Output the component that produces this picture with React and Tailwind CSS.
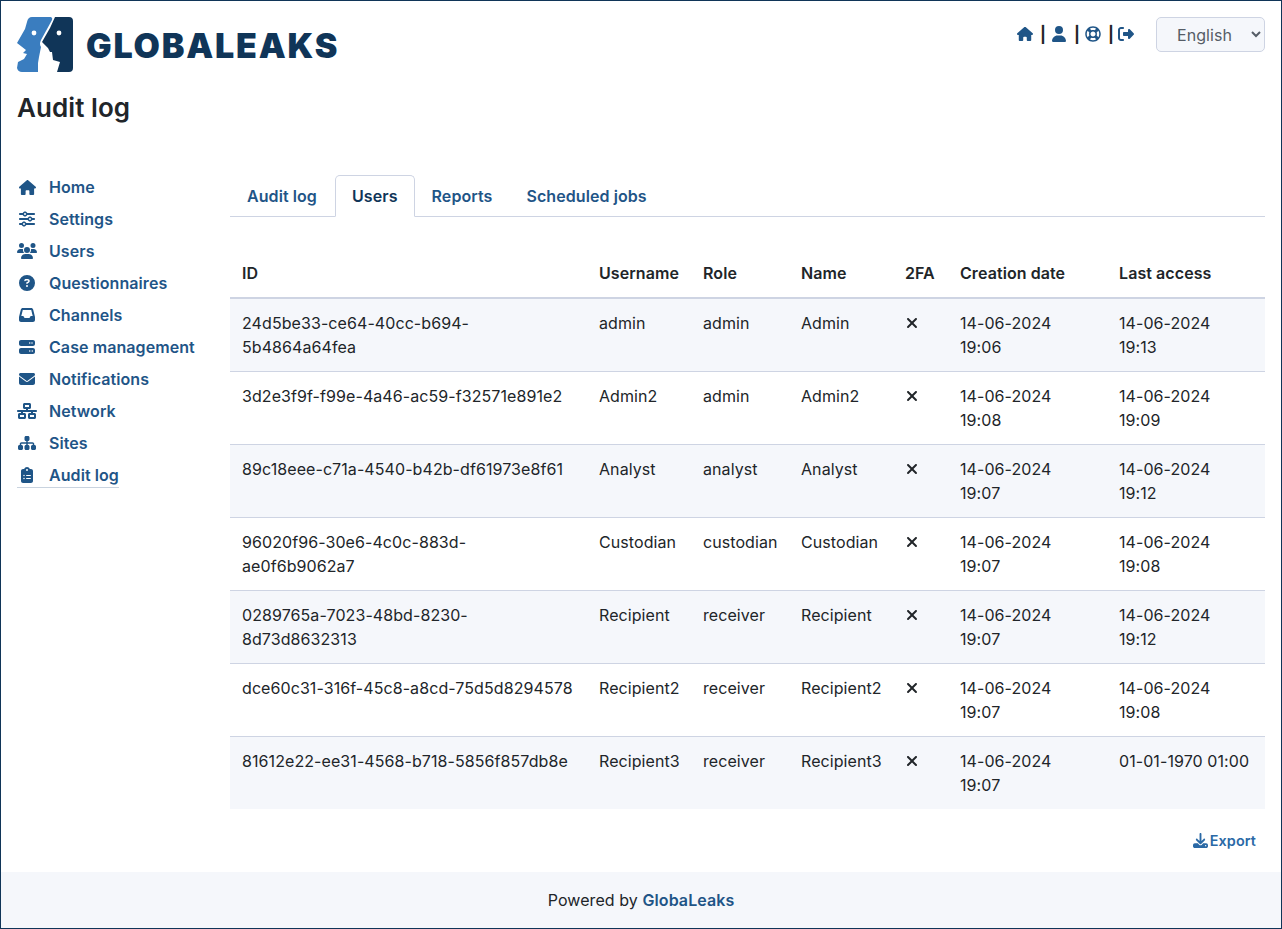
import React from "react";
import {
  FaHouse, FaUser, FaRightFromBracket, FaSliders, FaUsers, FaCircleQuestion,
  FaInbox, FaServer, FaEnvelope, FaNetworkWired, FaSitemap, FaClipboardList, FaDownload, FaXmark,
} from "react-icons/fa6";
import { FaRegLifeRing } from "react-icons/fa";

const nav = [
  ["Home", FaHouse, "text-[17px]"],
  ["Settings", FaSliders, "text-[16px]"],
  ["Users", FaUsers, "text-[20px]"],
  ["Questionnaires", FaCircleQuestion, "text-[16px]"],
  ["Channels", FaInbox, "text-[16px]"],
  ["Case management", FaServer, "text-[16px]"],
  ["Notifications", FaEnvelope, "text-[16px]"],
  ["Network", FaNetworkWired, "text-[20px]"],
  ["Sites", FaSitemap, "text-[18px]"],
  ["Audit log", FaClipboardList, "text-[16px]"],
];

const rows = [
  ["24d5be33-ce64-40cc-b694-5b4864a64fea", "admin", "admin", "Admin", "14-06-2024 19:06", "14-06-2024 19:13"],
  ["3d2e3f9f-f99e-4a46-ac59-f32571e891e2", "Admin2", "admin", "Admin2", "14-06-2024 19:08", "14-06-2024 19:09"],
  ["89c18eee-c71a-4540-b42b-df61973e8f61", "Analyst", "analyst", "Analyst", "14-06-2024 19:07", "14-06-2024 19:12"],
  ["96020f96-30e6-4c0c-883d-ae0f6b9062a7", "Custodian", "custodian", "Custodian", "14-06-2024 19:07", "14-06-2024 19:08"],
  ["0289765a-7023-48bd-8230-8d73d8632313", "Recipient", "receiver", "Recipient", "14-06-2024 19:07", "14-06-2024 19:12"],
  ["dce60c31-316f-45c8-a8cd-75d5d8294578", "Recipient2", "receiver", "Recipient2", "14-06-2024 19:07", "14-06-2024 19:08"],
  ["81612e22-ee31-4568-b718-5856f857db8e", "Recipient3", "receiver", "Recipient3", "14-06-2024 19:07", "01-01-1970 01:00"],
];

const heads = ["ID", "Username", "Role", "Name", "2FA", "Creation date", "Last access"];
const widths = ["w-[357px]", "w-[104px]", "w-[98px]", "w-[104px]", "w-[55px]", "w-[159px]", "w-[158px]"];

function Logo() {
  return (
    <svg viewBox="0 0 58 58" className="w-[58px] h-[58px] shrink-0">
      <path fill="#3a7dbf" d="M15 0H34Q36 1 35 3L24 23Q22 27 24 30L22 40L21 46V55H5Q1 55 0 51L1 45L7 42L10 37L6 36L9 33L0 26L8 12L10 5Q11 0 15 0Z" />
      <circle cx="17" cy="16" r="2.4" fill="#fff" />
      <path fill="#103558" d="M38 0H52Q56 0 56 4V51Q56 55 52 55H40L43 45L36 43L35 35L33 35L31 31L25 25L33 11Z" />
      <circle cx="42" cy="16" r="2.4" fill="#fff" />
    </svg>
  );
}

function Sep() {
  return <span className="w-1 mx-[7px] text-center font-bold text-[#212529]">|</span>;
}

export default function App() {
  return (
    <div className="min-h-[929px] flex flex-col border border-[#103558] bg-white text-[16px] leading-6 tracking-[0.08px] text-[#212529] font-['Inter',sans-serif]">
      <header className="flex items-start justify-between pl-4 pr-4 pt-4">
        <div className="flex items-center gap-[11px]">
          <Logo />
          <span className="text-[#103558] text-[34px] leading-[56px] font-black tracking-[1.8px]">GLOBALEAKS</span>
        </div>
        <div className="flex items-start">
          <div className="flex items-center h-6 mt-[5px] text-[#1f5587]">
            <FaHouse className="text-[16px]" />
            <Sep />
            <FaUser className="text-[16px]" />
            <Sep />
            <FaRegLifeRing className="text-[16px]" />
            <span className="w-1 ml-[7px] mr-[6px] text-center font-bold text-[#212529]">|</span>
            <FaRightFromBracket className="text-[16px]" />
          </div>
          <select className="ml-[22px] w-[109px] h-[35px] rounded-[5px] border border-[#ced4e3] bg-[#f5f7fb] pl-[16px] text-[#555d66] text-[16px]" defaultValue="English">
            <option>English</option>
          </select>
        </div>
      </header>
      <h1 className="pl-4 mt-[15px] text-[26px] leading-[36px] font-semibold text-[#212529]">Audit log</h1>
      <div className="flex flex-1 mt-[45px] pl-4 pr-4">
        <nav className="w-[213px] shrink-0 flex flex-col">
          {nav.map(([label, Icon, size]) => (
            <a key={label} className={`flex w-fit font-semibold text-[#1f5587] ${label === "Audit log" ? "h-[29px] pt-1 items-start border-b border-[#c9d3df]" : "h-8 items-center"}`}>
              <span className="w-[20px] h-6 flex items-center justify-center"><Icon className={size} /></span>
              <span className="ml-[12px]">{label}</span>
            </a>
          ))}
        </nav>
        <main className="flex-1 min-w-0 mt-[4px]">
          <div className="flex border-b border-[#ced4e3] h-[42px] font-semibold text-[#1f5587]">
            <a className="pl-[17px] pr-[18px] h-[42px] flex items-center">Audit log</a>
            <a className="px-4 h-[42px] flex items-center bg-white border border-[#ced4e3] border-b-white rounded-t-[5px] text-[#103558]">Users</a>
            <a className="pl-[17px] pr-[17px] h-[42px] flex items-center">Reports</a>
            <a className="pl-[17px] pr-4 h-[42px] flex items-center">Scheduled jobs</a>
          </div>
          <table className="mt-8 w-full table-fixed border-collapse">
            <colgroup>{widths.map((w, i) => <col key={i} className={w} />)}</colgroup>
            <thead>
              <tr className="border-b-2 border-[#ced4e3]">
                {heads.map((h) => (
                  <th key={h} className="px-3 py-3 text-left font-semibold">{h}</th>
                ))}
              </tr>
            </thead>
            <tbody>
              {rows.map((r, i) => (
                <tr key={r[0]} className={`${i % 2 === 0 ? "bg-[#f5f7fb]" : "bg-white"} ${i < rows.length - 1 ? "border-b border-[#ced4e3]" : ""}`}>
                  <td className="px-3 py-3 align-top break-words">{r[0]}</td>
                  <td className="px-3 py-3 align-top">{r[1]}</td>
                  <td className="px-3 py-3 align-top">{r[2]}</td>
                  <td className="px-3 py-3 align-top">{r[3]}</td>
                  <td className="px-3 py-3 align-top"><FaXmark className="mt-1 -ml-[1px] text-[16px]" /></td>
                  <td className="px-3 py-3 align-top">{r[4]}</td>
                  <td className={`pl-3 py-3 align-top ${r[5].startsWith("01-01") ? "pr-0 whitespace-nowrap" : "pr-[20px]"}`}>{r[5]}</td>
                </tr>
              ))}
            </tbody>
          </table>
          <div className="flex justify-end items-center gap-[2px] mt-[21px] pr-[9px] text-[14.4px] leading-[21px] font-semibold text-[#2a69a6]">
            <FaDownload className="text-[15px]" />
            <span>Export</span>
          </div>
        </main>
      </div>
      <footer className="bg-[#f5f7fb] h-[56px] flex items-center justify-center">
        <span>Powered by <a className="font-semibold text-[#1f5587]">GlobaLeaks</a></span>
      </footer>
    </div>
  );
}
